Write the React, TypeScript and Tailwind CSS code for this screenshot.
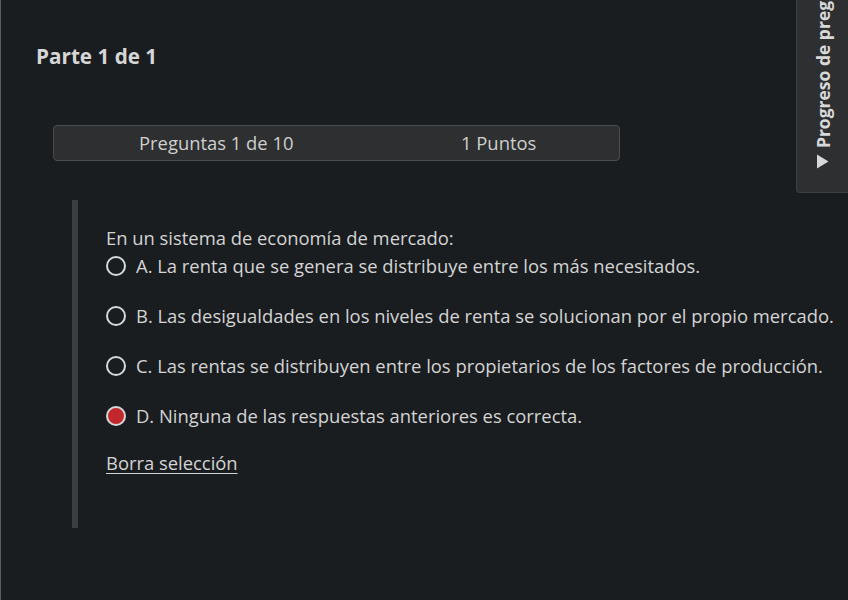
import React from 'react';

const options = [
  { id: 'a', label: 'A. La renta que se genera se distribuye entre los más necesitados.' },
  { id: 'b', label: 'B. Las desigualdades en los niveles de renta se solucionan por el propio mercado.' },
  { id: 'c', label: 'C. Las rentas se distribuyen entre los propietarios de los factores de producción.' },
  { id: 'd', label: 'D. Ninguna de las respuestas anteriores es correcta.' },
];

function Radio({ checked }: { checked: boolean }) {
  return checked ? (
    <span className="block h-[20px] w-[20px] shrink-0 rounded-full border-2 border-[#d8d8d8] bg-[#c1272d]" />
  ) : (
    <span className="block h-[20px] w-[20px] shrink-0 rounded-full border-2 border-[#d8d8d8]" />
  );
}

export default function App() {
  const selected = 'd';

  return (
    <div
      className="relative h-[600px] w-[848px] overflow-hidden border-l border-[#5a5c5e] bg-[#1a1d20] text-[#d4d4d4]"
      style={{ fontFamily: '"Open Sans", "Noto Sans", sans-serif' }}
    >
      {/* side tab */}
      <div className="absolute right-0 top-0 flex h-[193px] w-[52px] flex-col items-center justify-end overflow-hidden rounded-bl-[4px] border-b border-l border-[#3d3f41] bg-[#2d2f31] pb-[23px]">
        <div className="whitespace-nowrap text-[17.5px] font-bold leading-[24px] text-[#d8d8d8] [writing-mode:vertical-rl] rotate-180">
          Progreso de preguntas
        </div>
        <svg width="13" height="15" viewBox="0 0 13 15" className="mt-[6px] shrink-0">
          <path d="M1 0.5 L12.5 7.5 L1 14.5 Z" fill="#d8d8d8" />
        </svg>
      </div>

      <div className="pl-[35px] pt-[41px]">
        <h1 className="text-[20.7px] font-bold leading-[30px] text-[#d6d6d6]">Parte 1 de 1</h1>
      </div>

      <div className="ml-[52px] mt-[54px] flex h-[36px] w-[567px] items-center rounded-[4px] border border-[#4a4c4e] bg-[#2d2f30] text-[18.4px] text-[#cfcfcf]">
        <span className="ml-[85px] w-[322px]">Preguntas 1 de 10</span>
        <span>1 Puntos</span>
      </div>

      <div className="ml-[71px] mt-[39px] flex h-[328px] border-l-[6px] border-[#3b3d40]">
        <div className="pl-[28px] pt-[25px]">
          <p className="text-[18.4px] leading-[26px] text-[#d4d4d4]">En un sistema de economía de mercado:</p>
          <div className="mt-[2px] flex flex-col gap-[24px]">
            {options.map((o) => (
              <label key={o.id} className="flex h-[26px] items-center gap-[10px] whitespace-nowrap text-[18.4px] text-[#d4d4d4]">
                <Radio checked={o.id === selected} />
                <span>{o.label}</span>
              </label>
            ))}
          </div>
          <a className="mt-[21px] block text-[18.4px] leading-[26px] text-[#d4d4d4] underline underline-offset-[3px]">Borra selección</a>
        </div>
      </div>
    </div>
  );
}
